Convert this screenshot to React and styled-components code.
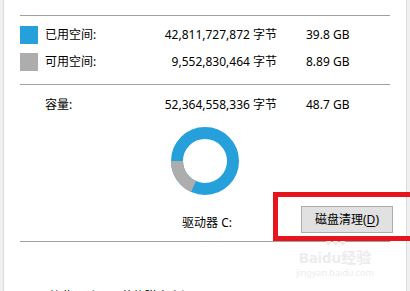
import styled, { createGlobalStyle } from "styled-components";

const GlobalStyle = createGlobalStyle`
  html, body {
    margin: 0;
    padding: 0;
    background: #ffffff;
  }
  body {
    font-family: "Noto Sans", "Noto Sans CJK SC", sans-serif;
    font-size: 12px;
    color: #000;
  }
`;

const usage = [
  { color: "#26a0da", label: "已用空间:", bytes: "42,811,727,872 字节", size: "39.8 GB" },
  { color: "#adadad", label: "可用空间:", bytes: "9,552,830,464 字节", size: "8.89 GB" },
];

const Donut = ({ used, total }) => {
  // free space arc ends at 9 o'clock, going anticlockwise
  const r = 28;
  const c = 34;
  const freeAngle = ((total - used) / total) * 360;
  const start = 270 - freeAngle;
  const rad = (start * Math.PI) / 180;
  const sx = c + r * Math.sin(rad);
  const sy = c - r * Math.cos(rad);
  return (
    <svg width="68" height="68" viewBox="0 0 68 68">
      <circle cx={c} cy={c} r={r} fill="none" stroke="#26a0da" strokeWidth="12" />
      <path
        d={`M${sx.toFixed(2)} ${sy.toFixed(2)} A${r} ${r} 0 0 1 ${c - r} ${c}`}
        fill="none"
        stroke="#adadad"
        strokeWidth="12"
      />
    </svg>
  );
};

export default function App() {
  return (
    <>
      <GlobalStyle />
      <Frame>
        <Gutter />
        <Panel>
          <CutText>文件系统:</CutText>
          <Divider />
          <UsageList>
            {usage.map((u) => (
              <Row key={u.label}>
                <Swatch $color={u.color} />
                <Label>{u.label}</Label>
                <Bytes>{u.bytes}</Bytes>
                <Size>{u.size}</Size>
              </Row>
            ))}
          </UsageList>
          <Divider $top={13} />
          <Row $top={11}>
            <Swatch $color="transparent" />
            <Label>容量:</Label>
            <Bytes>52,364,558,336 字节</Bytes>
            <Size>48.7 GB</Size>
          </Row>
          <Chart>
            <Donut used={39.8} total={48.7} />
          </Chart>
          <DriveRow>
            <span />
            <DriveLabel>驱动器 C:</DriveLabel>
            <CleanButton>
              磁盘清理(<u>D</u>)
            </CleanButton>
          </DriveRow>
          <Divider $top={8} />
          <CheckRow>
            <Box />
            <span>压缩此驱动器以节约磁盘空间</span>
          </CheckRow>
        </Panel>
        <Gutter $right />
        <Watermark>
          <Paw>
            <i /><i /><i />
          </Paw>
          <Brand>Baidu经验</Brand>
          <Site>jingyan.baidu.com</Site>
        </Watermark>
        <Highlight />
      </Frame>
    </>
  );
}

const Frame = styled.div`
  position: relative;
  display: flex;
  width: 410px;
  height: 291px;
  overflow: hidden;
  background: #fff;
`;

const Gutter = styled.div`
  width: 3px;
  flex: none;
  background: #f0f0f0;
  border-${(p) => (p.$right ? "left" : "right")}: 1px solid #dcdcdc;
`;

const Panel = styled.div`
  flex: 1;
  display: flex;
  flex-direction: column;
  padding: 0 16px;
  min-width: 0;

  & > * {
    flex: none;
  }
`;

const CutText = styled.div`
  line-height: 18px;
  margin-top: -15px;
  height: 18px;
`;

const Divider = styled.div`
  height: 1px;
  background: #a0a0a0;
  margin-top: ${(p) => p.$top ?? 12}px;
`;

const UsageList = styled.div`
  display: flex;
  flex-direction: column;
  gap: 9px;
  margin-top: 10px;
`;

const Row = styled.div`
  display: flex;
  align-items: center;
  height: 18px;
  line-height: 18px;
  margin-top: ${(p) => p.$top ?? 0}px;
  white-space: nowrap;
`;

const Swatch = styled.span`
  width: 18px;
  height: 18px;
  margin-right: 7px;
  background: ${(p) => p.$color};
  flex: none;
`;

const Label = styled.span`
  flex: 1;
`;

const Bytes = styled.span`
  text-align: right;
`;

const Size = styled.span`
  width: 84px;
  margin-left: 29px;
  flex: none;
`;

const Chart = styled.div`
  display: flex;
  justify-content: center;
  margin-top: 13px;
`;

const DriveRow = styled.div`
  display: grid;
  grid-template-columns: 1fr auto 1fr;
  align-items: end;
  margin-top: 11px;
`;

const DriveLabel = styled.span`
  line-height: 18px;
  padding-left: 4px;
  padding-bottom: 1px;
`;

const CleanButton = styled.button`
  justify-self: end;
  margin-right: -3px;
  width: 92px;
  height: 27px;
  padding: 0;
  background: #e1e1e1;
  border: 1px solid #adadad;
  font: inherit;
  color: #000;
  line-height: 18px;

  u {
    text-underline-offset: 2px;
  }
`;

const CheckRow = styled.div`
  display: flex;
  align-items: flex-start;
  gap: 4px;
  margin-top: 46px;
  line-height: 18px;
  white-space: nowrap;
`;

const Box = styled.span`
  width: 11px;
  height: 11px;
  margin-top: 3px;
  border: 1px solid #333;
  flex: none;
`;

const Highlight = styled.div`
  position: absolute;
  left: 273px;
  top: 192px;
  width: 145px;
  height: 49px;
  box-sizing: border-box;
  border: 5px solid #e8141c;
  pointer-events: none;
`;

const Watermark = styled.div`
  position: absolute;
  left: 290px;
  top: 240px;
  width: 90px;
  display: flex;
  flex-direction: column;
  align-items: center;
  gap: 3px;
  color: #ececec;
  pointer-events: none;
`;

const Paw = styled.div`
  display: flex;
  gap: 2px;
  height: 6px;

  i {
    width: 5px;
    height: 5px;
    border-radius: 50%;
    background: #ececec;
  }
`;

const Brand = styled.div`
  font-size: 15px;
  line-height: 16px;
  font-weight: bold;
`;

const Site = styled.div`
  font-size: 9px;
  line-height: 10px;
`;
